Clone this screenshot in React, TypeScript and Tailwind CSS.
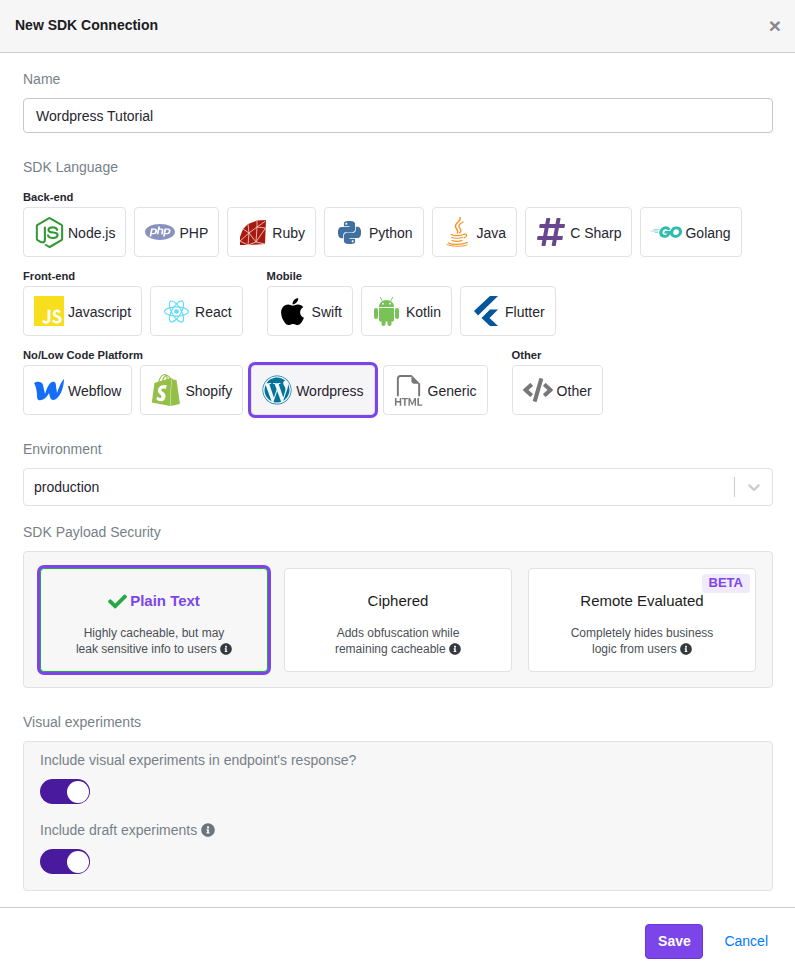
import React from "react";
import { BiLogoNodejs } from "react-icons/bi";
import { SiPhp, SiPython, SiJavascript, SiReact, SiShopify } from "react-icons/si";
import { FaHashtag, FaApple, FaWordpress, FaCode, FaCheck, FaInfoCircle } from "react-icons/fa";
import { FaGolang } from "react-icons/fa6";
import { BsFiletypeHtml } from "react-icons/bs";

function RubyIcon() {
  return (
    <svg viewBox="0 0 26 25" className="h-[25px] w-[26px]">
      <path d="M26 0L17 .6L8 4L3 9L0 17L0 25L8 25L25 24Z" fill="#a81a0f" />
      <path
        d="M0 21L9 13L17 7L25.5 8M17 .6L17 7L25.5 1M8 4L9 13L3 9M9 13L16 22L17 7M9 13L8 25L16 22L25 24M16 22L25.5 8M0 21L8 25"
        fill="none"
        stroke="#f6dcd8"
        strokeWidth="0.8"
      />
    </svg>
  );
}

function JavaIcon() {
  return (
    <svg viewBox="0 0 24 30" className="h-[30px] w-[24px]" fill="none" stroke="#f0952b" strokeLinecap="round">
      <path d="M14 0.5C16 4 8 6 9.5 10C10.5 12.5 12.5 13 11.5 16" strokeWidth="1.5" />
      <path d="M17 5C12.5 7 12 9.5 14 11.5C15.5 13 15 15 13.5 16" strokeWidth="1.3" />
      <path d="M5 17.5C8 19 14 19 17.5 17.5" strokeWidth="1.2" />
      <path d="M5.5 20.5C8 21.5 14 21.5 16.5 20.5" strokeWidth="1.2" />
      <path d="M6 23.5C9 24.5 13 24.5 16 23.5" strokeWidth="1.2" />
      <path d="M17.5 17.5C21 16 22 19 18 21" strokeWidth="1.1" />
      <path d="M2.5 26C6 28 15 28 21.5 25.5" strokeWidth="1.2" />
      <path d="M1 27.5C6 29.8 17 29.8 21 28" strokeWidth="1" />
    </svg>
  );
}

function AndroidIcon() {
  return (
    <svg viewBox="0 0 25 30" className="h-[30px] w-[25px]" fill="#78c257">
      <path d="M5 11C5 7 8 4 12.5 4S20 7 20 11Z" />
      <path d="M8 4.5L6.3 1.2M17 4.5L18.7 1.2" stroke="#78c257" strokeWidth="0.9" strokeLinecap="round" />
      <circle cx="9" cy="7.7" r="0.9" fill="#fff" />
      <circle cx="16" cy="7.7" r="0.9" fill="#fff" />
      <path d="M5 12H20V24A1.5 1.5 0 0 1 18.5 25.500H6.500A1.500 1.500 0 0 1 5 24Z" />
      <rect x="0" y="12" width="4" height="11" rx="2" />
      <rect x="21" y="12" width="4" height="11" rx="2" />
      <rect x="7.500" y="23" width="4" height="7" rx="2" />
      <rect x="13.500" y="23" width="4" height="7" rx="2" />
    </svg>
  );
}

function FlutterIcon() {
  return (
    <svg viewBox="0 0 24 30" className="h-[30px] w-[24px]" fill="#02569b">
      <path d="M16 0H24L4 19.500L0 15Z" />
      <path d="M16 13.500H24L15.500 22L24 30H16L7.500 22Z" />
    </svg>
  );
}

function WebflowIcon() {
  return (
    <svg viewBox="0 0 30 22" className="h-[22px] w-[30px]" fill="#146ef5">
      <path d="M0 4C3 2 8 2 9 6L11 15C13 9 15 4 18 3C21 2 22 4 22 7L23 14C25 8 27 3 30 0C30 7 27 17 22 20C19 22 17 21 16 18L15 14C13 18 10 21 7 21C4 22 3 20 3 17C3 13 2 7 0 4Z" />
    </svg>
  );
}

function Lang({ icon, name, selected }: { icon: React.ReactNode; name: string; selected?: boolean }) {
  return (
    <button
      type="button"
      className={
        "flex h-[50px] items-center rounded border border-[#e0e2e7] pl-[10px] pr-[10px] text-[14px] text-[#26262e] " +
        (selected ? "bg-[#f5f5f7] ring-[3px] ring-[#7c45ea]" : "bg-white")
      }
    >
      <span className="mr-[4px] flex h-[30px] w-[30px] items-center justify-center [&>svg]:shrink-0">{icon}</span>
      <span className="pt-[2px]">{name}</span>
    </button>
  );
}

function Group({ title, children }: { title: string; children: React.ReactNode }) {
  return (
    <div>
      <div className="h-[17px] text-[11.2px] font-bold leading-[15px] text-[#26262e]">{title}</div>
      <div className="flex gap-2">{children}</div>
    </div>
  );
}

function Info({ className }: { className: string }) {
  return <FaInfoCircle className={"inline-block align-[-2px] " + className} />;
}

function Security({
  title,
  lines,
  selected,
  beta,
}: {
  title: string;
  lines: [string, string];
  selected?: boolean;
  beta?: boolean;
}) {
  return (
    <div
      className={
        "relative flex h-[104px] w-[228px] flex-col items-center rounded border pt-[22px] text-center " +
        (selected
          ? "border-[#28a745] bg-[#f7f7f8] ring-[3px] ring-[#7c45ea]"
          : "border-[#e0e2e7] bg-white")
      }
    >
      {beta && (
        <span className="absolute right-[5px] top-[5px] rounded bg-[#f1eafc] px-[7px] pb-[3px] pt-[1px] text-[13px] font-bold leading-[15px] text-[#7c45ea]">
          BETA
        </span>
      )}
      <div
        className={
          "flex h-[20px] items-center text-[15px] leading-[20px] " +
          (selected ? "font-bold text-[#7c45ea]" : "text-[#1c1c22]")
        }
      >
        {selected && <FaCheck className="mr-[3px] text-[19px] text-[#28a745]" />}
        {title}
      </div>
      <div className="mt-[14px] text-[12px] leading-[16px] text-[#4b4f55]">
        <div>{lines[0]}</div>
        <div>
          {lines[1]} <Info className="text-[12px] text-[#343a40]" />
        </div>
      </div>
    </div>
  );
}

function Toggle() {
  return (
    <div className="mt-[8px] flex h-[25px] w-[50px] items-center justify-end rounded-full bg-[#4a1a9e] pr-[1px]">
      <span className="h-[22px] w-[22px] rounded-full bg-white" />
    </div>
  );
}

const label = "text-[14px] leading-[21px] text-[#777f87]";

export default function App() {
  return (
    <div className="flex h-[973px] w-[795px] flex-col overflow-hidden bg-white font-['Liberation_Sans',Arial,sans-serif]">
      <header className="flex h-[53px] shrink-0 items-center justify-between border-b border-[#cccccc] bg-[#f6f6f7] pl-[15px] pr-[14px]">
        <h1 className="mb-[2px] text-[14px] font-bold text-[#1c1c22]">New SDK Connection</h1>
        <span className="mb-[2px] text-[21px] font-bold leading-none text-[#88888c]">×</span>
      </header>

      <main className="flex-1 pl-[23px] pr-[22px] pt-[16px]">
        <div className={label}>Name</div>
        <input
          readOnly
          value="Wordpress Tutorial"
          className="mt-[8px] block h-[35px] w-full rounded border border-[#c5c8cd] bg-white px-[12px] text-[14px] text-[#26262e]"
        />

        <div className={label + " mt-[24px]"}>SDK Language</div>

        <div className="mt-[12px] flex flex-col gap-[12px]">
          <Group title="Back-end">
            <Lang name="Node.js" icon={<BiLogoNodejs className="text-[37px] text-[#339933]" />} />
            <Lang name="PHP" icon={<SiPhp className="text-[30px] text-[#8892bf]" />} />
            <Lang name="Ruby" icon={<RubyIcon />} />
            <Lang name="Python" icon={<SiPython className="text-[23px] text-[#3f709f]" />} />
            <Lang name="Java" icon={<JavaIcon />} />
            <Lang name="C Sharp" icon={<FaHashtag className="text-[32px] text-[#68478f]" />} />
            <Lang name="Golang" icon={<FaGolang className="text-[31px] text-[#2dbcaf]" />} />
          </Group>
          <div className="flex gap-[24px]">
            <Group title="Front-end">
              <Lang name="Javascript" icon={<SiJavascript className="text-[30px] text-[#f7df1e]" />} />
              <Lang name="React" icon={<SiReact className="text-[25px] text-[#61dafb]" />} />
            </Group>
            <Group title="Mobile">
              <Lang name="Swift" icon={<FaApple className="text-[31px] text-black" />} />
              <Lang name="Kotlin" icon={<AndroidIcon />} />
              <Lang name="Flutter" icon={<FlutterIcon />} />
            </Group>
          </div>
          <div className="flex gap-[24px]">
            <Group title="No/Low Code Platform">
              <Lang name="Webflow" icon={<WebflowIcon />} />
              <Lang name="Shopify" icon={<SiShopify className="text-[32px] text-[#95bf47]" />} />
              <Lang name="Wordpress" selected icon={<FaWordpress className="text-[30px] text-[#00749a]" />} />
              <Lang name="Generic" icon={<BsFiletypeHtml className="text-[31px] text-[#77777a]" />} />
            </Group>
            <Group title="Other">
              <Lang name="Other" icon={<FaCode className="text-[30px] text-[#77777a]" />} />
            </Group>
          </div>
        </div>

        <div className={label + " mt-[24px]"}>Environment</div>
        <div className="mt-[8px] flex h-[38px] items-center rounded border border-[#e0e2e7] bg-white pl-[10px] pr-[8px] text-[14px] text-[#26262e]">
          <span className="flex-1">production</span>
          <span className="h-[20px] w-px bg-[#cccccc]" />
          <svg viewBox="0 0 20 20" className="ml-[9px] h-[20px] w-[20px] fill-[#cccccc]">
            <path d="M4.516 7.548c.436-.446 1.043-.481 1.576 0L10 11.295l3.908-3.747c.533-.481 1.141-.446 1.574 0 .436.445.408 1.197 0 1.615-.406.418-4.695 4.502-4.695 4.502-.217.223-.502.335-.787.335s-.57-.112-.789-.335c0 0-4.287-4.084-4.695-4.502s-.436-1.17 0-1.615z" />
          </svg>
        </div>

        <div className={label + " mt-[16px]"}>SDK Payload Security</div>
        <div className="mt-[8px] flex h-[137px] gap-[16px] rounded border border-[#e0e2e7] bg-[#f7f7f8] p-[16px]">
          <Security selected title="Plain Text" lines={["Highly cacheable, but may", "leak sensitive info to users"]} />
          <Security title="Ciphered" lines={["Adds obfuscation while", "remaining cacheable"]} />
          <Security beta title="Remote Evaluated" lines={["Completely hides business", "logic from users"]} />
        </div>

        <div className={label + " mt-[24px]"}>Visual experiments</div>
        <div className="mt-[8px] h-[150px] rounded border border-[#e0e2e7] bg-[#f7f7f8] px-[16px] pt-[8px]">
          <div className={label}>Include visual experiments in endpoint's response?</div>
          <Toggle />
          <div className={label + " mt-[16px]"}>
            Include draft experiments <Info className="text-[14px] text-[#6c757d]" />
          </div>
          <Toggle />
        </div>
      </main>

      <footer className="flex h-[66px] shrink-0 items-start justify-end border-t border-[#cccccc] pr-[27px] pt-[16px] text-[14px]">
        <button type="button" className="h-[35px] w-[58px] rounded border border-[#6a35e0] bg-[#7c45ea] font-bold text-white">
          Save
        </button>
        <span className="ml-[21px] leading-[35px] text-[#007bff]">Cancel</span>
      </footer>
    </div>
  );
}
